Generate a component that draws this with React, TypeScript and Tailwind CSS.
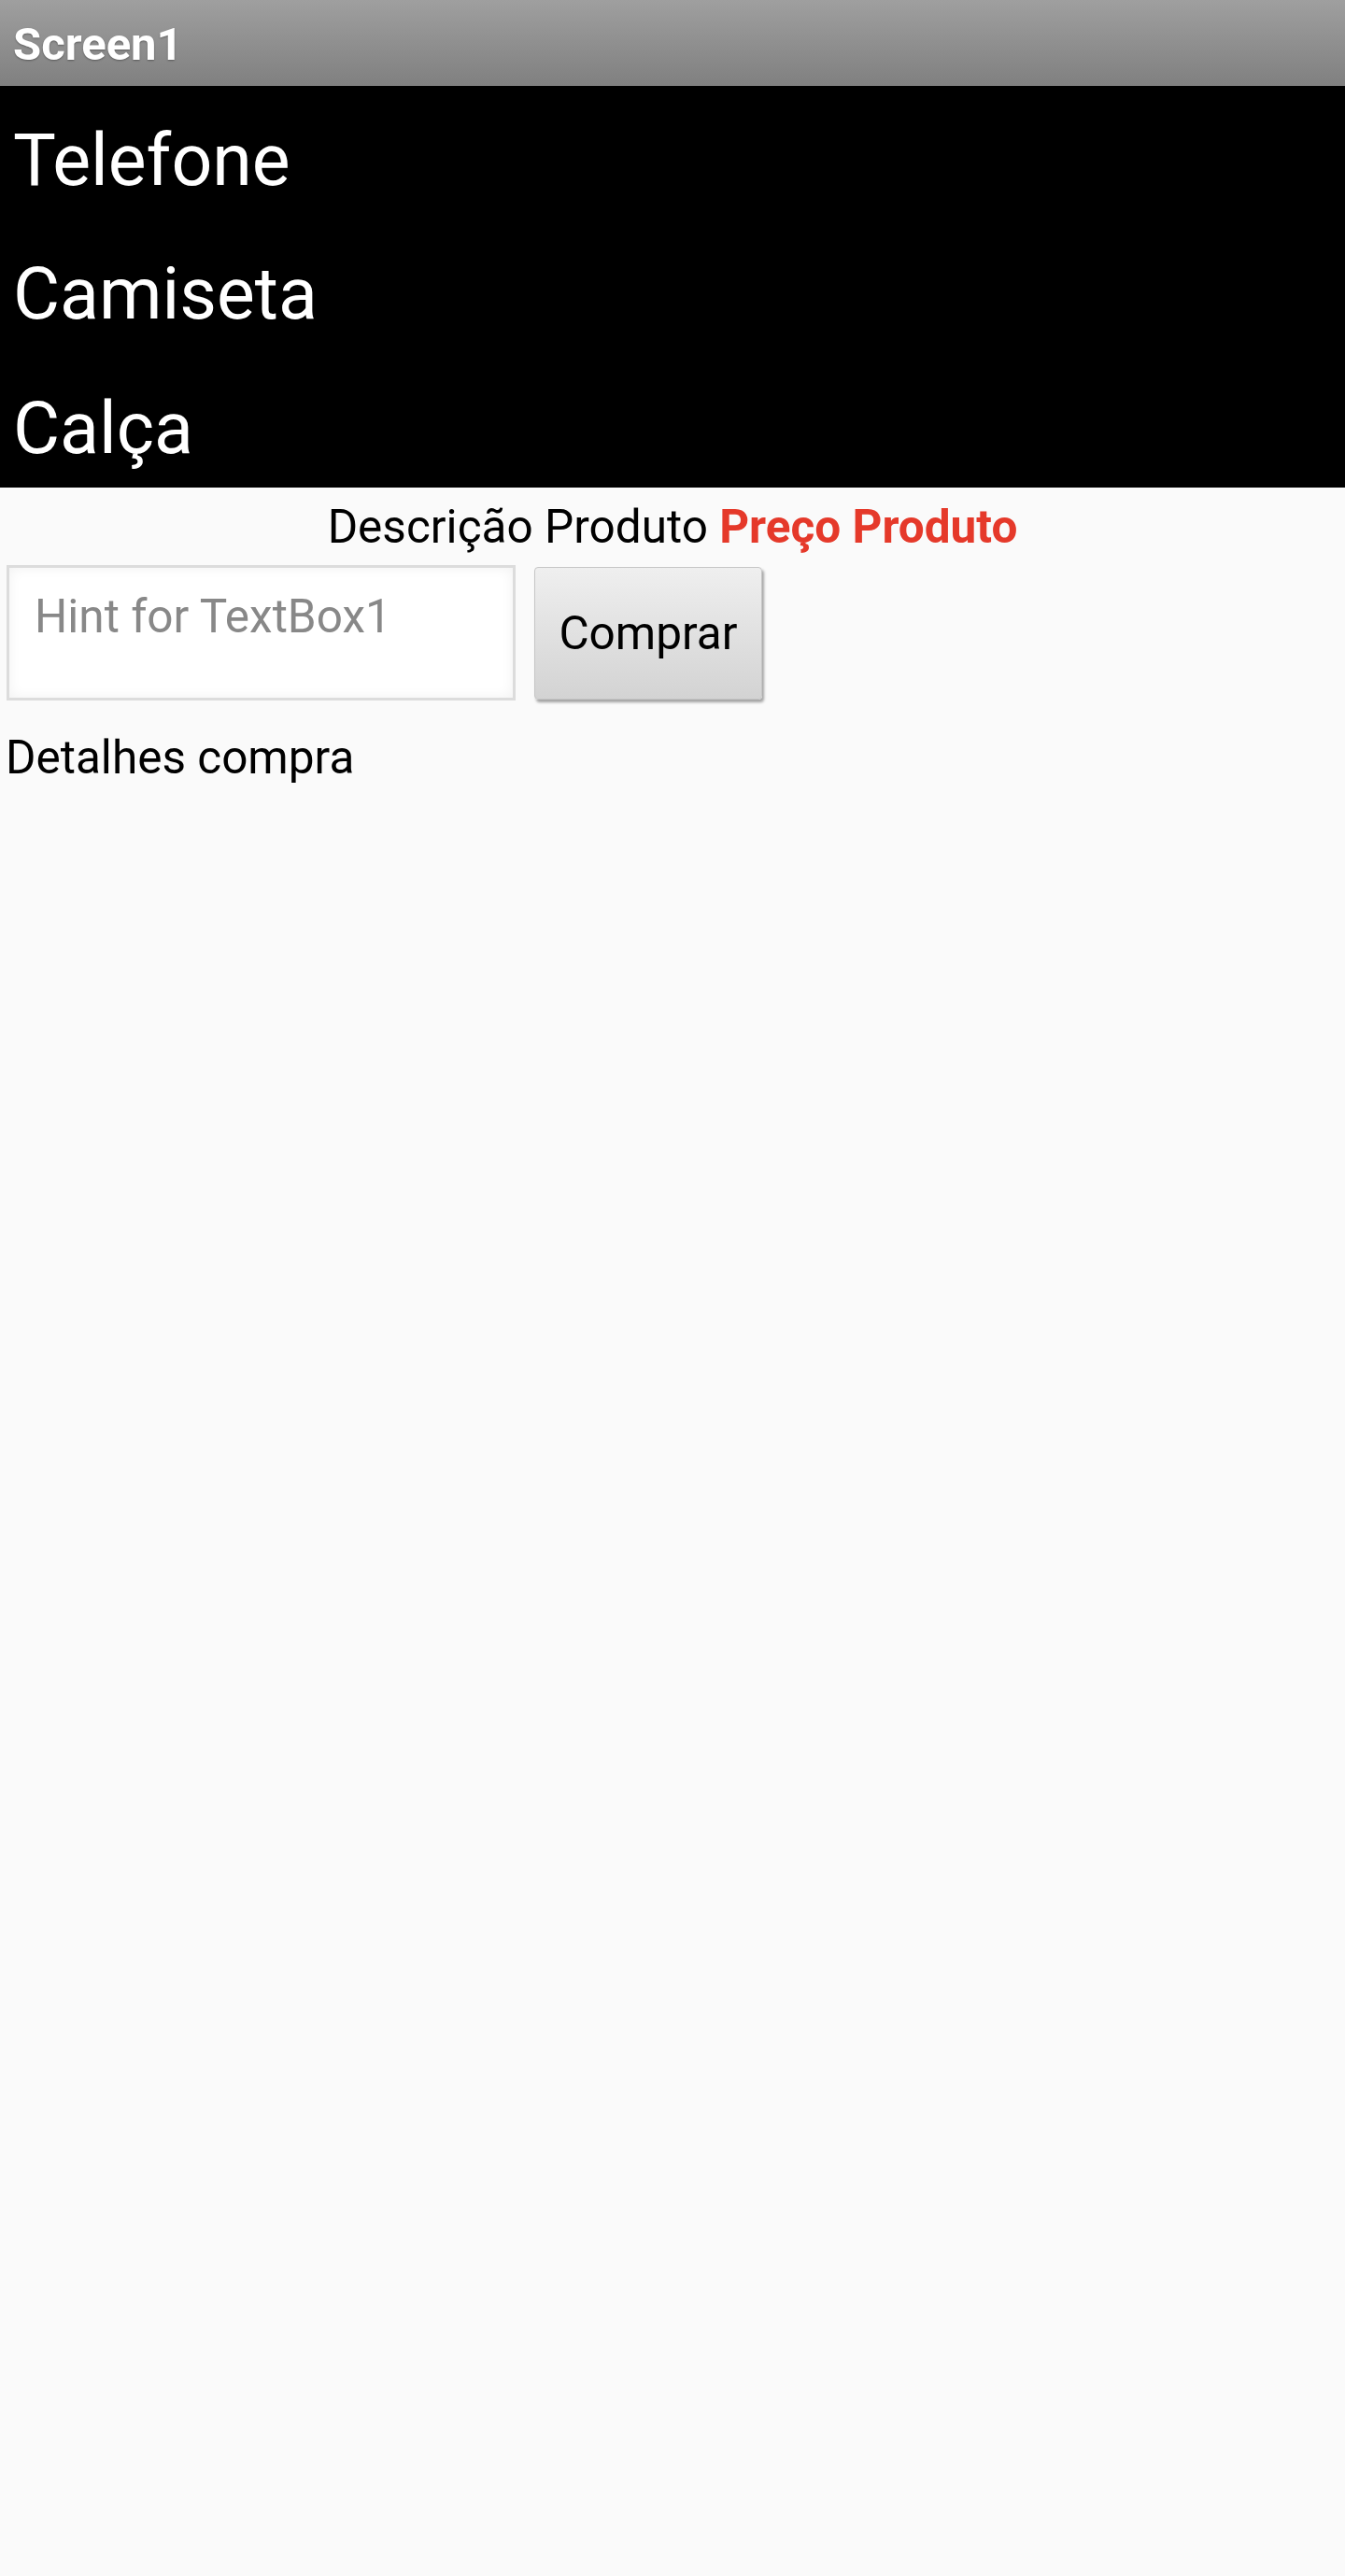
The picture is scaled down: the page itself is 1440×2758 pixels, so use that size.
export default function App() {
  const items = ["Telefone", "Camiseta", "Calça"];

  return (
    <div className="min-h-screen bg-[#fafafa] font-['Roboto',sans-serif] text-black">
      {/* Title bar */}
      <div className="h-[92px] flex items-center pl-[14px] pt-[3px] bg-gradient-to-b from-[#9f9f9f] to-[#808080]">
        <span className="text-[49px] leading-[56px] font-bold text-white [text-shadow:0_1px_2px_rgba(0,0,0,0.35)]">
          Screen1
        </span>
      </div>

      {/* List view */}
      <div className="grid grid-rows-3 h-[430px] bg-black">
        {items.map((item) => (
          <div key={item} className="pl-[14px] pt-[36px] text-[77px] leading-[89px] text-white">
            {item}
          </div>
        ))}
      </div>

      {/* Product label */}
      <div className="pt-[14px] h-[69px] text-center text-[49.5px] leading-[57px]">
        <span>Descrição Produto </span>
        <span className="font-bold text-[#e5392a]">Preço Produto</span>
      </div>

      {/* Text box + button */}
      <div className="mt-[14px] flex items-start gap-[20px] pl-[7px]">
        <div className="w-[545px] h-[145px] border-[3px] border-[#dcdcdc] bg-white shadow-[inset_0_0_14px_rgba(0,0,0,0.06)] pl-[27px] pt-[24px]">
          <span className="text-[49.5px] leading-[57px] text-[#888888]">Hint for TextBox1</span>
        </div>
        <button className="mt-[2px] w-[244px] h-[142px] rounded-[4px] border border-[#c6c6c6] bg-gradient-to-b from-[#efefef] to-[#d3d3d3] shadow-[2px_3px_3px_rgba(0,0,0,0.35)] text-[49.5px] leading-[57px] text-black">
          Comprar
        </button>
      </div>

      {/* Details */}
      <div className="mt-[33px] pl-[6px] text-[49.5px] leading-[57px]">Detalhes compra</div>
    </div>
  );
}
